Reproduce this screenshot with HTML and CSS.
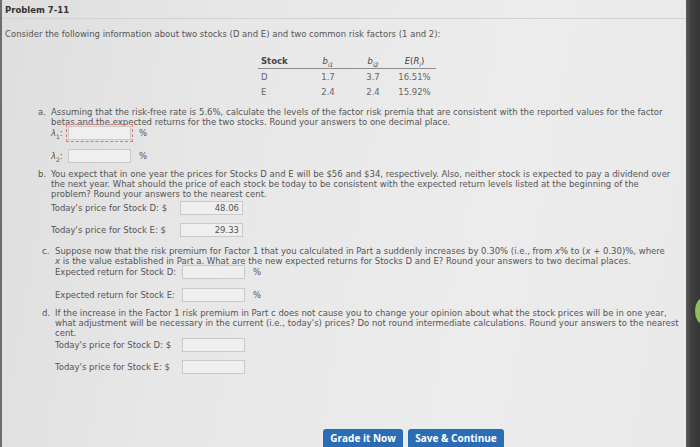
FILE: index.html
```html
<!DOCTYPE html>
<html>
<head>
<meta charset="utf-8">
<link rel="stylesheet" href="styles.css">
</head>
<body>
<div class="screen">
  <div class="page">
    <div class="header">Problem 7-11</div>
    <p class="intro">Consider the following information about two stocks (D and E) and two common risk factors (1 and 2):</p>
    <table class="data">
      <thead>
        <tr><th class="c1">Stock</th><th class="c2"><i>b</i><sub><i>i1</i></sub></th><th class="c3"><i>b</i><sub><i>i2</i></sub></th><th class="c4"><i>E</i>(<i>R</i><sub><i>i</i></sub>)</th></tr>
      </thead>
      <tbody>
        <tr><td class="c1">D</td><td class="c2">1.7</td><td class="c3">3.7</td><td class="c4">16.51%</td></tr>
        <tr><td class="c1">E</td><td class="c2">2.4</td><td class="c3">2.4</td><td class="c4">15.92%</td></tr>
      </tbody>
    </table>

    <div class="part part-a">
      <div class="q"><span class="mk">a.</span><span class="qt">Assuming that the risk-free rate is 5.6%, calculate the levels of the factor risk premia that are consistent with the reported values for the factor betas.and.the.expected returns for the two stocks. Round your answers to one decimal place.</span></div>
      <div class="row r-l1"><span class="lab lab-l"><i>λ</i><sub>1</sub>:</span><span class="box box-focus"></span><span class="unit">%</span></div>
      <div class="row r-l2"><span class="lab lab-l"><i>λ</i><sub>2</sub>:</span><span class="box"></span><span class="unit">%</span></div>
    </div>

    <div class="part part-b">
      <div class="q"><span class="mk">b.</span><span class="qt">You expect that in one year the prices for Stocks D and E will be $56 and $34, respectively. Also, neither stock is expected to pay a dividend over the next year. What should the price of each stock be today to be consistent with the expected return levels listed at the beginning of the problem? Round your answers to the nearest cent.</span></div>
      <div class="row r-b1"><span class="lab lab-b">Today's price for Stock D: $</span><span class="box">48.06</span></div>
      <div class="row r-b2"><span class="lab lab-b">Today's price for Stock E: $</span><span class="box">29.33</span></div>
    </div>

    <div class="part part-c">
      <div class="q"><span class="mk">c.</span><span class="qt">Suppose now that the risk premium for Factor 1 that you calculated in Part a suddenly increases by 0.30% (i.e., from <i>x</i>% to (<i>x</i> + 0.30)%, where <i>x</i> is the value established in Part a. What are the new expected returns for Stocks D and E? Round your answers to two decimal places.</span></div>
      <div class="row r-c1"><span class="lab lab-c">Expected return for Stock D:</span><span class="box"></span><span class="unit">%</span></div>
      <div class="row r-c2"><span class="lab lab-c">Expected return for Stock E:</span><span class="box"></span><span class="unit">%</span></div>
    </div>

    <div class="part part-d">
      <div class="q"><span class="mk">d.</span><span class="qt">If the increase in the Factor 1 risk premium in Part c does not cause you to change your opinion about what the stock prices will be in one year, what adjustment will be necessary in the current (i.e., today's) prices? Do not round intermediate calculations. Round your answers to the nearest cent.</span></div>
      <div class="row r-d1"><span class="lab lab-d">Today's price for Stock D: $</span><span class="box"></span></div>
      <div class="row r-d2"><span class="lab lab-d">Today's price for Stock E: $</span><span class="box"></span></div>
    </div>

    <div class="actions">
      <button class="btn btn-grade">Grade it Now</button>
      <button class="btn btn-save">Save &amp; Continue</button>
    </div>
  </div>
  <div class="edge"><span class="edge-dot"></span></div>
</div>
</body>
</html>
```
FILE: styles.css
```css
html, body {
  margin: 0;
  padding: 0;
}
body {
  width: 700px;
  height: 447px;
  overflow: hidden;
  font-family: "DejaVu Sans", Verdana, sans-serif;
  font-size: 8.5px;
  line-height: 10px;
  color: #555;
}
.screen {
  display: flex;
  width: 700px;
  height: 447px;
}
.page {
  width: 684px;
  height: 447px;
  border-left: 2px solid #6d6d6d;
  background: linear-gradient(100deg, #dedede 0%, #e7e7e7 30%, #ececec 70%, #e9e9e9 100%);
  overflow: hidden;
}
.edge {
  position: relative;
  width: 14px;
  height: 447px;
  background: linear-gradient(90deg, #5a5a5a 0%, #3e3e3e 40%, #363636 100%);
}
.edge-dot {
  position: absolute;
  left: 9px;
  top: 298px;
  width: 16px;
  height: 26px;
  border-radius: 50%;
  background: #8fbf5a;
}
.header {
  height: 19px;
  box-sizing: border-box;
  padding: 4px 0 0 3px;
  font-size: 8.5px;
  line-height: 12px;
  font-weight: bold;
  color: #333;
  border-bottom: 1px solid #d2d2d2;
}
.intro {
  margin: 10px 0 0 3px;
}
.data {
  border-collapse: collapse;
  margin: 15px 0 0 256px;
  color: #666;
}
.data th {
  height: 14px;
  padding: 0;
  font-weight: normal;
  color: #444;
  border-bottom: 1px solid #8c8c8c;
}
.data th.c1 {
  font-weight: bold;
}
.data td {
  height: 15px;
  padding: 0;
}
.data sub {
  font-size: 6px;
  line-height: 0;
}
.c1 { width: 42px; text-align: left; padding-left: 3px !important; }
.c2 { width: 50px; text-align: center; }
.c3 { width: 40px; text-align: center; }
.c4 { width: 43px; text-align: center; }

.part {
  margin-left: 36px;
  width: 642px;
}
.part-c {
  margin-left: 40px;
  width: 630px;
}
.part-d {
  margin-left: 40px;
  width: 638px;
}
.q {
  display: flex;
}
.mk {
  width: 13px;
  flex: none;
}
.qt {
  flex: 1;
}
.qt i {
  line-height: 0;
}
.row {
  display: flex;
  align-items: center;
  height: 14px;
  margin-left: 13px;
}
.lab {
  flex: none;
  white-space: nowrap;
}
.lab sub {
  font-size: 6px;
  line-height: 0;
}
.lab-l { width: 17px; }
.lab-b { width: 129px; }
.lab-c { width: 127px; }
.lab-d { width: 127px; }
.box {
  flex: none;
  box-sizing: border-box;
  width: 63px;
  height: 14px;
  border: 1px solid #c9c9c9;
  background: #efefef;
  text-align: right;
  padding-right: 3px;
  line-height: 12px;
  color: #555;
}
.box-focus {
  outline: 1px dashed #d47a7a;
  outline-offset: 1px;
}
.unit {
  margin-left: 8px;
}
.part-a { margin-top: 8px; }
.r-l1 { margin-top: -1px; }
.r-l2 { margin-top: 9px; }
.part-b { margin-top: 6px; }
.r-b1 { margin-top: 2px; }
.r-b2 { margin-top: 8px; }
.part-c { margin-top: 9px; }
.r-c1 { margin-top: -1px; }
.r-c2 { margin-top: 9px; }
.part-d { margin-top: 6px; }
.r-d1 { margin-top: 0; }
.r-d2 { margin-top: 8px; }

.actions {
  display: flex;
  gap: 5px;
  margin: 55px 0 0 321px;
}
.btn {
  height: 24px;
  border: none;
  border-radius: 3px 3px 0 0;
  background: #2a6db6;
  color: #fff;
  font-family: "Open Sans", "DejaVu Sans", sans-serif;
  font-weight: bold;
  font-size: 10px;
  padding: 0 0 6px 0;
}
.btn-grade { width: 80px; }
.btn-save { width: 96px; }
```
